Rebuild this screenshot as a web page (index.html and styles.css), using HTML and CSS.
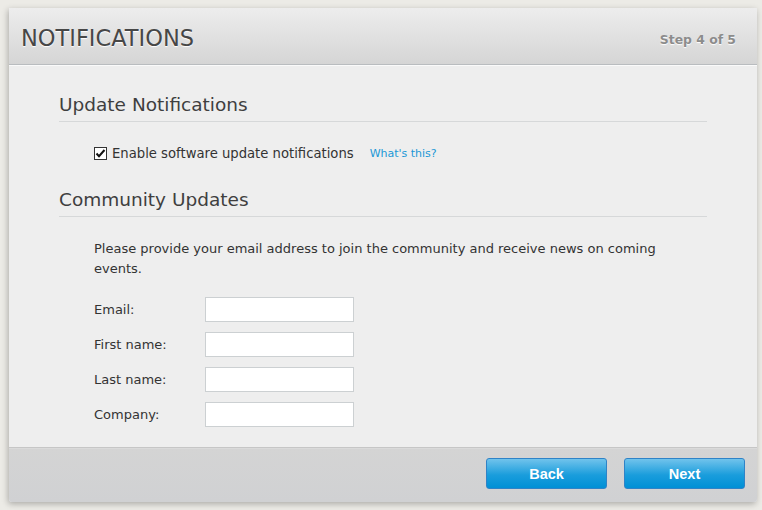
FILE: index.html
```html
<!DOCTYPE html>
<html>
<head>
<meta charset="utf-8">
<link rel="stylesheet" href="styles.css">
</head>
<body>
<div class="panel">
  <div class="header">
    <h1 class="title">NOTIFICATIONS</h1>
    <span class="step">Step 4 of 5</span>
  </div>
  <div class="content">
    <div class="section">
      <h2 class="section-title">Update Notifications</h2>
      <div class="check-row">
        <label class="check-label"><span class="checkbox"><svg viewBox="0 0 11 11" width="11" height="11"><path d="M1.5 5.5 L4 8.2 L9.5 2" fill="none" stroke="#111" stroke-width="2"/></svg></span>Enable software update notifications</label>
        <a class="help-link" href="#">What's this?</a>
      </div>
    </div>
    <div class="section">
      <h2 class="section-title">Community Updates</h2>
      <p class="intro">Please provide your email address to join the community and receive news on coming events.</p>
      <div class="form">
        <label class="field-label">Email:</label><input class="field" type="text">
        <label class="field-label">First name:</label><input class="field" type="text">
        <label class="field-label">Last name:</label><input class="field" type="text">
        <label class="field-label">Company:</label><input class="field" type="text">
      </div>
    </div>
  </div>
  <div class="footer">
    <button class="btn">Back</button>
    <button class="btn">Next</button>
  </div>
</div>
</body>
</html>
```

FILE: styles.css
```css
html, body {
  margin: 0;
  padding: 0;
}
body {
  background: #ecebe6;
  font-family: "DejaVu Sans", Verdana, sans-serif;
  color: #3c3c3c;
  width: 762px;
  height: 510px;
  overflow: hidden;
}
.panel {
  margin: 8px 0 0 9px;
  width: 748px;
  height: 494px;
  display: flex;
  flex-direction: column;
  background: #eeeeee;
  border-radius: 0 0 3px 3px;
  box-shadow: -1px 2px 6px rgba(0,0,0,0.28);
  overflow: hidden;
}
.header {
  height: 56px;
  flex: none;
  display: flex;
  align-items: center;
  justify-content: space-between;
  padding: 0 21px 0 12px;
  background: linear-gradient(#ededed, #d5d5d5);
  border-bottom: 1px solid #b9bcbf;
  box-shadow: 0 1px 0 #fafafa;
}
.title {
  margin: 3px 0 0 0;
  font-family: Tahoma, "DejaVu Sans", Verdana, sans-serif;
  font-weight: normal;
  font-size: 22.5px;
  color: #474747;
  text-shadow: 0 1px 1px #ffffff;
}
.step {
  margin-top: 6px;
  font-size: 12.4px;
  font-weight: bold;
  color: #8c8c8c;
  text-shadow: 0 1px 1px #ffffff;
}
.content {
  flex: 1;
  padding: 29px 50px 0 50px;
}
.section-title {
  margin: 0;
  padding-bottom: 5px;
  font-size: 18.5px;
  font-weight: normal;
  color: #3f3f3f;
  border-bottom: 1px solid #d6d8d9;
  line-height: 22px;
}
.check-row {
  display: flex;
  align-items: center;
  padding: 23px 0 0 35px;
  height: 17px;
  margin-bottom: 27px;
}
.check-label {
  font-size: 13.2px;
  color: #333333;
  display: flex;
  align-items: center;
}
.checkbox {
  box-sizing: border-box;
  width: 13px;
  height: 13px;
  margin-right: 5px;
  border: 1px solid #333333;
  background: #ffffff;
  display: flex;
  align-items: center;
  justify-content: center;
}
.help-link {
  margin-left: 16px;
  font-size: 11px;
  color: #1b98d6;
  text-decoration: none;
}
.intro {
  margin: 22px 0 0 35px;
  font-size: 13px;
  line-height: 20px;
  color: #333333;
  width: 590px;
}
.form {
  margin: 18px 0 0 35px;
  display: grid;
  grid-template-columns: 111px 149px;
  row-gap: 10px;
  align-items: center;
}
.field-label {
  font-size: 13px;
  color: #333333;
}
.field {
  box-sizing: border-box;
  width: 149px;
  height: 25px;
  margin: 0;
  border: 1px solid #ccd0d2;
  background: #ffffff;
  padding: 2px 4px;
}
.footer {
  height: 55px;
  flex: none;
  box-sizing: border-box;
  display: flex;
  justify-content: flex-end;
  align-items: flex-start;
  gap: 17px;
  padding: 10px 12px 0 0;
  background: linear-gradient(#d4d4d4, #d0d1d3);
  border-top: 1px solid #c6c6c6;
  box-shadow: inset 0 1px 0 #dadada;
}
.btn {
  width: 121px;
  height: 31px;
  margin: 0;
  border: 1px solid #2f83c7;
  border-radius: 3px;
  background: linear-gradient(#71c3ec, #1a9ddc 55%, #0090d6);
  color: #ffffff;
  font-family: "Liberation Sans", Arial, sans-serif;
  font-weight: bold;
  font-size: 14.5px;
  cursor: pointer;
  padding: 0;
}
```
